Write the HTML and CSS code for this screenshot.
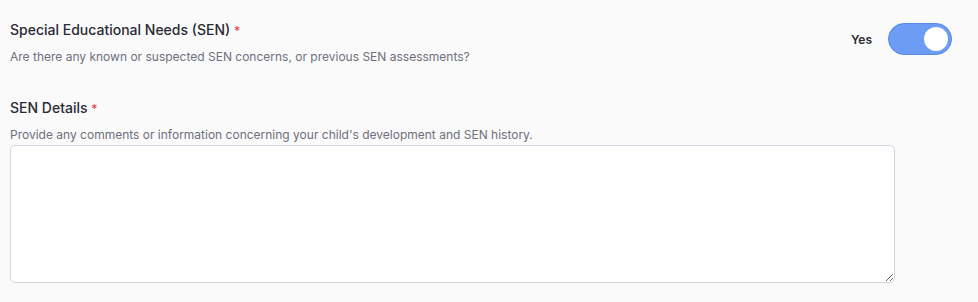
FILE: index.html
```html
<!DOCTYPE html>
<html>
<head>
  <meta charset="UTF-8">
  <title>SEN</title>
  <link rel="stylesheet" href="styles.css">
</head>
<body>
  <div class="field field-row">
    <div class="field-text">
      <div class="label">Special Educational Needs (SEN) <span class="req">*</span></div>
      <div class="help">Are there any known or suspected SEN concerns, or previous SEN assessments?</div>
    </div>
    <label class="toggle">
      <span class="toggle-text">Yes</span>
      <span class="switch"><span class="knob"></span></span>
    </label>
  </div>

  <div class="field">
    <div class="label">SEN Details <span class="req">*</span></div>
    <div class="help">Provide any comments or information concerning your child's development and SEN history.</div>
    <textarea class="details"></textarea>
  </div>
</body>
</html>
```

FILE: styles.css
```css
body {
  margin: 0;
  background: #fafafb;
  font-family: Inter, 'Noto Sans', sans-serif;
  color: #2b2b33;
}
.field {
  padding: 0 10px;
}
.field-row {
  display: flex;
  justify-content: space-between;
  align-items: flex-start;
  padding-top: 21px;
  padding-right: 26px;
}
.label {
  font-size: 14px;
  font-weight: 500;
  line-height: 18px;
}
.req {
  color: #e5484d;
  font-size: 12px;
}
.help {
  font-size: 12px;
  color: #6f6f7d;
  margin-top: 9px;
  line-height: 16px;
}
.field + .field {
  margin-top: 34px;
}
/* Toggle switch on the right */
.toggle {
  display: flex;
  align-items: center;
  gap: 16px;
  margin-top: 2px;
}
.toggle-text {
  font-size: 12px;
  font-weight: 600;
  color: #2b2b33;
}
.switch {
  display: flex;
  justify-content: flex-end;
  align-items: center;
  width: 64px;
  height: 32px;
  box-sizing: border-box;
  padding: 0 3px;
  background: #6d9cf5;
  border: 1px solid #5b87e6;
  border-radius: 16px;
}
.knob {
  width: 24px;
  height: 24px;
  border-radius: 50%;
  background: #fff;
}
.details {
  display: block;
  margin-top: 2px;
  width: 885px;
  height: 138px;
  box-sizing: border-box;
  border: 1px solid #d6d3e0;
  border-radius: 5px;
  background: #fff;
  resize: both;
}
```
